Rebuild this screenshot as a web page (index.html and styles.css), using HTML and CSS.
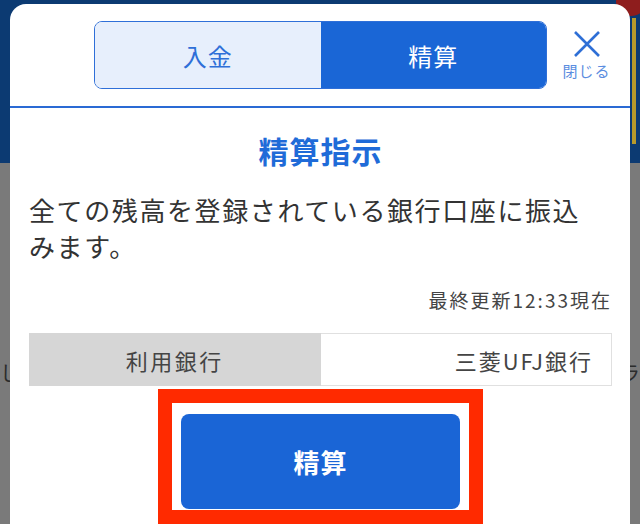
FILE: index.html
```html
<!DOCTYPE html>
<html lang="ja">
<head>
  <meta charset="UTF-8">
  <title>精算指示</title>
  <link rel="stylesheet" href="styles.css">
</head>
<body>
  <div class="backdrop">
    <span class="deco-red"></span>
    <span class="deco-yellow"></span>
    <span class="deco-left">し</span>
    <span class="deco-right">ラ</span>
  </div>

  <div class="modal">
    <div class="modal-header">
      <div class="tabs">
        <div class="tab">入金</div>
        <div class="tab active">精算</div>
      </div>
      <div class="close">
        <svg width="30" height="28" viewBox="0 0 30 28">
          <path d="M3 2 L27 26 M27 2 L3 26" stroke="#2e6fd6" stroke-width="2.6" fill="none"/>
        </svg>
        <span>閉じる</span>
      </div>
    </div>

    <div class="modal-body">
      <h2 class="title">精算指示</h2>
      <p class="message">全ての残高を登録されている銀行口座に振込みます。</p>
      <div class="updated">最終更新12:33現在</div>

      <div class="bank-row">
        <div class="bank-label">利用銀行</div>
        <div class="bank-value">三菱UFJ銀行</div>
      </div>

      <div class="highlight">
        <button class="submit">精算</button>
      </div>
    </div>
  </div>
</body>
</html>
```

FILE: styles.css
```css
body {
  margin: 0;
  height: 524px;
  overflow: hidden;
  font-family: "Noto Sans CJK JP", "Noto Sans", sans-serif;
  background: linear-gradient(to bottom, #0c3a72 0, #0c3a72 163px, #7a7a7a 163px);
}

.backdrop {
  position: absolute;
  top: 0;
  left: 0;
  width: 640px;
  height: 524px;
}

.deco-red {
  position: absolute;
  top: -12px;
  right: -6px;
  width: 30px;
  height: 28px;
  border-radius: 50%;
  background: #8e1d1d;
}

.deco-yellow {
  position: absolute;
  top: 18px;
  right: 4px;
  width: 4px;
  height: 126px;
  background: #b79a2c;
}

.deco-left {
  position: absolute;
  top: 358px;
  left: 0;
  font-size: 20px;
  color: #2c2c2c;
}

.deco-right {
  position: absolute;
  top: 358px;
  right: 0;
  font-size: 20px;
  color: #2c2c2c;
}

.modal {
  position: relative;
  margin: 4px 10px 0;
  height: 520px;
  background: #fff;
  border-radius: 16px 16px 0 0;
}

.modal-header {
  display: flex;
  height: 104px;
  box-sizing: border-box;
  padding: 17px 0 17px 84px;
  border-bottom: 2px solid #2a6ad4;
}

.tabs {
  display: flex;
  width: 453px;
  height: 68px;
  border: 1px solid #2f6fd8;
  border-radius: 8px;
  box-sizing: border-box;
  overflow: hidden;
}

.tab {
  flex: 1;
  display: flex;
  align-items: center;
  justify-content: center;
  font-size: 24px;
  letter-spacing: 1px;
  color: #2f6fd8;
  background: #e7effc;
}

.tab.active {
  color: #fff;
  background: #1a66d6;
}

.close {
  flex: 1;
  display: flex;
  flex-direction: column;
  align-items: center;
  padding-top: 9px;
  padding-right: 4px;
}

.close span {
  font-size: 15px;
  letter-spacing: 1px;
  color: #5b8de0;
  margin-top: 2px;
}

.modal-body {
  padding: 0 18px 0 19px;
}

.title {
  margin: 24px 0 0;
  font-size: 30px;
  line-height: 36px;
  letter-spacing: 1px;
  text-align: center;
  color: #1f6bd8;
}

.message {
  margin: 24px 0 0;
  max-width: 570px;
  font-size: 26px;
  line-height: 36px;
  letter-spacing: 1.6px;
  color: #333;
}

.updated {
  margin-top: 24px;
  font-size: 19px;
  line-height: 24px;
  letter-spacing: 2px;
  text-align: right;
  color: #444;
}

.bank-row {
  display: flex;
  margin-top: 21px;
  height: 53px;
}

.bank-label {
  width: 50%;
  display: flex;
  align-items: center;
  justify-content: center;
  background: #d6d6d6;
  font-size: 22px;
  letter-spacing: 2.5px;
  color: #444;
}

.bank-value {
  width: 50%;
  box-sizing: border-box;
  display: flex;
  align-items: center;
  justify-content: flex-end;
  padding-right: 18px;
  border: 1px solid #e0e0e0;
  border-left: none;
  font-size: 22px;
  letter-spacing: 2px;
  color: #444;
}

.highlight {
  width: 279px;
  margin: 3px auto 0;
  padding: 11px 9px 1px;
  border: 14px solid #ff2a00;
  background: #fff;
}

.submit {
  display: block;
  width: 279px;
  height: 95px;
  border: none;
  border-radius: 8px;
  background: #1a65d6;
  color: #fff;
  font-family: inherit;
  font-size: 26px;
  font-weight: bold;
  letter-spacing: 1px;
}
```
